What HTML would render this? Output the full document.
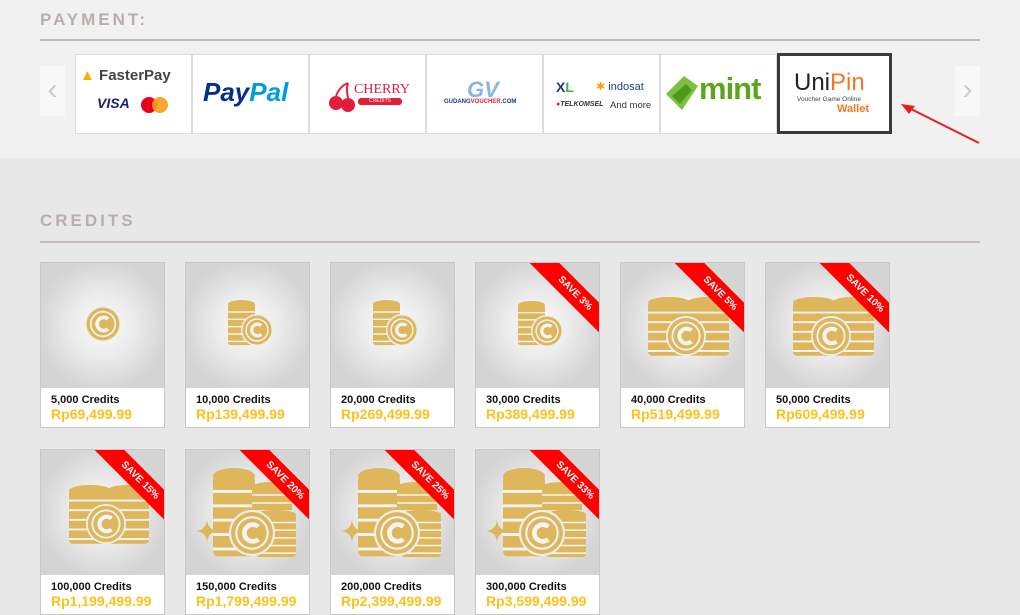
<!DOCTYPE html><html><head><meta charset="utf-8"><style>
*{margin:0;padding:0;box-sizing:border-box}
body{width:1020px;height:592px;overflow:hidden;background:#e8e8e8;font-family:"Liberation Sans",sans-serif;position:relative}
.top{position:absolute;left:0;top:0;width:1020px;height:158px;background:#f1f1f1}
.h{position:absolute;left:40px;font-weight:bold;font-size:17px;letter-spacing:3px;color:#b9aeab}
.line{position:absolute;left:40px;width:940px;height:2px;background:#c4b8b4}
.tile{position:absolute;top:54px;width:117px;height:80px;background:#fff;overflow:hidden;border:1px solid #dcdcdc}
.arr{position:absolute;top:66px;width:25px;height:50px;background:#f8f8f8;color:#ccc;font-size:30px;text-align:center;line-height:48px}
.card{position:absolute;width:125px;height:166px;border:1px solid #c8c8c8;background:#fff;overflow:hidden}
.img{position:absolute;left:0;top:0;width:123px;height:125px;background:radial-gradient(circle at 50% 50%,#fbfbfb 0,#ececec 35%,#d4d4d4 75%);overflow:hidden}
.img svg{position:absolute;left:0;top:0}
.rib{position:absolute;width:112px;height:21px;right:-32px;top:20px;transform:rotate(45deg);background:#f00;color:#fff;font-size:10px;font-weight:bold;text-align:center;line-height:21px}
.nm{position:absolute;left:10px;top:131px;font-size:11px;font-weight:bold;color:#111}
.pr{position:absolute;left:10px;top:143px;font-size:14px;font-weight:bold;color:#fcc21b}
</style></head><body>
<svg width="0" height="0" style="position:absolute">
<defs>
<symbol id="s" viewBox="0 0 30 50" preserveAspectRatio="none"><rect x="0" y="4" width="30" height="45" rx="3" fill="#deb65c"/><ellipse cx="15" cy="4.5" rx="15" ry="4.5" fill="#deb65c"/><g stroke="#f4f4f4" stroke-width="1.6"><path d="M0 13H30M0 21H30M0 29H30M0 37H30M0 45H30"/></g></symbol>
<symbol id="c" viewBox="-22 -22 44 44"><circle r="21" fill="#deb65c" stroke="#eee" stroke-width="2"/><circle r="15" fill="none" stroke="#f4f4f4" stroke-width="2"/><path d="M6 -6A8 8 0 1 0 6 6" fill="none" stroke="#f4f4f4" stroke-width="4.5"/></symbol>
<symbol id="p" viewBox="0 0 20 20"><path d="M10 0Q11 9 20 10Q11 11 10 20Q9 11 0 10Q9 9 10 0Z" fill="#deb65c"/></symbol>
</defs></svg>
<div class="top"></div>
<div class="h" style="top:10px">PAYMENT:</div>
<div class="line" style="top:39px"></div>
<div class="arr" style="left:40px">‹</div>
<div class="arr" style="left:955px">›</div>
<div class="tile" style="left:75px"><div style="position:absolute;left:4px;top:12px;font-size:15px;font-weight:bold;color:#444"><span style="color:#f0b400">▲</span> FasterPay</div><div style="position:absolute;left:21px;top:40px;font-size:14px;font-weight:bold;font-style:italic;color:#1a1f71">VISA</div><svg style="position:absolute;left:64px;top:41px" width="30" height="18"><circle cx="9" cy="9" r="8" fill="#eb001b"/><circle cx="20" cy="9" r="8" fill="#f79e1b" opacity=".9"/></svg></div>
<div class="tile" style="left:192px"><div style="position:absolute;left:10px;top:22px;font-size:26px;font-weight:bold;font-style:italic;color:#003087">Pay<span style="color:#009cde">Pal</span></div></div>
<div class="tile" style="left:309px"><svg style="position:absolute;left:18px;top:26px" width="30" height="32"><circle cx="8" cy="22" r="7" fill="#e31e3c"/><circle cx="20" cy="24" r="7" fill="#e31e3c"/><path d="M8 15Q12 5 20 2M20 17Q18 8 20 2" stroke="#e31e3c" stroke-width="2" fill="none"/></svg><div style="position:absolute;left:44px;top:27px;font-family:'Liberation Serif',serif;font-size:14px;color:#e31e3c">CHERRY</div><div style="position:absolute;left:48px;top:43px;width:44px;height:7px;background:#e31e3c;border-radius:3px;font-size:5px;color:#fff;text-align:center;line-height:7px">CREDITS</div></div>
<div class="tile" style="left:426px"><div style="position:absolute;left:40px;top:22px;font-size:22px;font-weight:bold;font-style:italic;color:#8ab7e0">GV</div><div style="position:absolute;left:17px;top:44px;font-size:6px;font-weight:bold;color:#1b3b8a">GUDANG<span style="color:#e31e3c">VOUCHER</span>.COM</div></div>
<div class="tile" style="left:543px"><div style="position:absolute;left:12px;top:24px;font-size:14px;font-weight:bold;color:#1b3b8a">X<span style="color:#3bb54a">L</span></div><div style="position:absolute;left:52px;top:25px;font-size:11px;color:#1b3b8a"><span style="color:#f7a21b">✱</span> indosat</div><div style="position:absolute;left:12px;top:46px;font-size:7px;font-style:italic;font-weight:bold;color:#333"><span style="color:#e31e3c">●</span>TELKOMSEL</div><div style="position:absolute;left:66px;top:45px;font-size:9.5px;color:#333">And more</div></div>
<div class="tile" style="left:660px"><svg style="position:absolute;left:3px;top:19px" width="36" height="38"><path d="M2 20L20 2L34 12L18 36Z" fill="#7cc242"/><path d="M8 22L22 10L28 16L16 30Z" fill="#4e9a1c"/></svg><div style="position:absolute;left:38px;top:16px;font-size:31px;font-weight:bold;color:#5aa51c;letter-spacing:-1px">mint</div></div>
<div class="tile" style="left:777px;top:53px;width:115px;height:81px;border:3px solid #3a3a3a"><div style="position:absolute;left:14px;top:13px;font-size:24px;color:#222">Uni<span style="color:#f07a24">Pin</span></div><div style="position:absolute;left:17px;top:40px;font-size:6.5px;color:#444">Voucher Game Online</div><div style="position:absolute;left:57px;top:47px;font-size:11px;font-weight:bold;color:#f07a24">Wallet</div></div>
<svg style="position:absolute;left:895px;top:98px" width="90" height="50"><path d="M84 45L12 9" stroke="#e8201c" stroke-width="2"/><path d="M6 6L20 8L14 16Z" fill="#e8201c"/></svg>
<div class="h" style="top:211px">CREDITS</div>
<div class="line" style="top:241px"></div>

<div class="card" style="left:40px;top:262px"><div class="img"><svg width="123" height="125"><use href="#c" x="44" y="43" width="36" height="36"/></svg></div><div class="nm">5,000 Credits</div><div class="pr">Rp69,499.99</div></div>
<div class="card" style="left:185px;top:262px"><div class="img"><svg width="123" height="125"><use href="#s" x="42" y="37" width="27" height="46"/><use href="#c" x="55" y="51" width="32" height="32"/></svg></div><div class="nm">10,000 Credits</div><div class="pr">Rp139,499.99</div></div>
<div class="card" style="left:330px;top:262px"><div class="img"><svg width="123" height="125"><use href="#s" x="42" y="37" width="27" height="46"/><use href="#c" x="55" y="51" width="32" height="32"/></svg></div><div class="nm">20,000 Credits</div><div class="pr">Rp269,499.99</div></div>
<div class="card" style="left:475px;top:262px"><div class="img"><svg width="123" height="125"><use href="#s" x="42" y="38" width="27" height="45"/><use href="#c" x="55" y="52" width="32" height="32"/></svg><div class="rib">SAVE 3%</div></div><div class="nm">30,000 Credits</div><div class="pr">Rp389,499.99</div></div>
<div class="card" style="left:620px;top:262px"><div class="img"><svg width="123" height="125"><use href="#s" x="27" y="34" width="42" height="60"/><use href="#s" x="66" y="34" width="42" height="60"/><use href="#c" x="45" y="53" width="40" height="40"/></svg><div class="rib">SAVE 5%</div></div><div class="nm">40,000 Credits</div><div class="pr">Rp519,499.99</div></div>
<div class="card" style="left:765px;top:262px"><div class="img"><svg width="123" height="125"><use href="#s" x="27" y="34" width="42" height="60"/><use href="#s" x="66" y="34" width="42" height="60"/><use href="#c" x="45" y="53" width="40" height="40"/></svg><div class="rib">SAVE 10%</div></div><div class="nm">50,000 Credits</div><div class="pr">Rp609,499.99</div></div>

<div class="card" style="left:40px;top:449px"><div class="img"><svg width="123" height="125"><use href="#s" x="28" y="35" width="42" height="60"/><use href="#s" x="66" y="35" width="42" height="60"/><use href="#c" x="45" y="54" width="40" height="40"/></svg><div class="rib">SAVE 15%</div></div><div class="nm">100,000 Credits</div><div class="pr">Rp1,199,499.99</div></div>
<div class="card" style="left:185px;top:449px"><div class="img"><svg width="123" height="125"><use href="#p" x="10" y="70" width="22" height="22"/><use href="#s" x="27" y="18" width="42" height="90"/><use href="#s" x="66" y="32" width="40" height="50"/><use href="#s" x="70" y="60" width="40" height="48"/><use href="#c" x="43" y="60" width="46" height="46"/></svg><div class="rib">SAVE 20%</div></div><div class="nm">150,000 Credits</div><div class="pr">Rp1,799,499.99</div></div>
<div class="card" style="left:330px;top:449px"><div class="img"><svg width="123" height="125"><use href="#p" x="10" y="70" width="22" height="22"/><use href="#s" x="27" y="18" width="42" height="90"/><use href="#s" x="66" y="32" width="40" height="50"/><use href="#s" x="70" y="60" width="40" height="48"/><use href="#c" x="43" y="60" width="46" height="46"/></svg><div class="rib">SAVE 25%</div></div><div class="nm">200,000 Credits</div><div class="pr">Rp2,399,499.99</div></div>
<div class="card" style="left:475px;top:449px"><div class="img"><svg width="123" height="125"><use href="#p" x="10" y="70" width="22" height="22"/><use href="#s" x="27" y="18" width="42" height="90"/><use href="#s" x="66" y="32" width="40" height="50"/><use href="#s" x="70" y="60" width="40" height="48"/><use href="#c" x="43" y="60" width="46" height="46"/></svg><div class="rib">SAVE 33%</div></div><div class="nm">300,000 Credits</div><div class="pr">Rp3,599,499.99</div></div>
</body></html>
